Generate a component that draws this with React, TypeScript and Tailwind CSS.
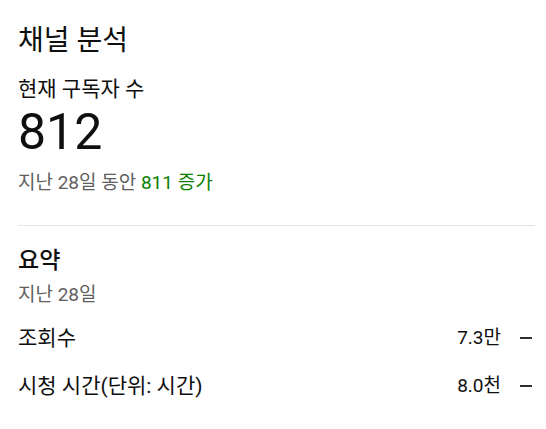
const font = { fontFamily: 'Roboto, "Noto Sans CJK KR", sans-serif' };

function MetricRow({ label, value }: { label: string; value: string }) {
  return (
    <div className="flex items-center h-6 leading-6 text-[#0f0f0f]">
      <span className="flex-1 text-[21px]">{label}</span>
      <span className="text-[19px]">{value}</span>
      <span className="ml-[19px] mr-[3px] w-3 h-[1.5px] bg-[#303030]" />
    </div>
  );
}

export default function App() {
  return (
    <div className="w-[546px] h-[429px] bg-white pl-[18px] pr-[11px] pt-[25px]" style={font}>
      <h1 className="text-[28px] leading-8 font-normal text-[#0f0f0f]">채널 분석</h1>

      <p className="mt-[19px] text-[21px] leading-[26px] text-[#0f0f0f]">현재 구독자 수</p>
      <p className="mt-[2px] text-[50px] leading-[56px] text-[#0f0f0f]">812</p>
      <p className="mt-[11px] text-[19px] leading-6 text-[#606060]">
        지난 28일 동안 <span className="text-[#0a8000]">811 증가</span>
      </p>

      <div className="mt-[30px] h-px bg-[#e5e5e5]" />

      <h2 className="mt-[21px] text-[23px] leading-7 font-medium text-[#0f0f0f]">요약</h2>
      <p className="mt-2 text-[19px] leading-6 text-[#606060]">지난 28일</p>

      <div className="mt-[19px] flex flex-col gap-6">
        <MetricRow label="조회수" value="7.3만" />
        <MetricRow label="시청 시간(단위: 시간)" value="8.0천" />
      </div>
    </div>
  );
}
